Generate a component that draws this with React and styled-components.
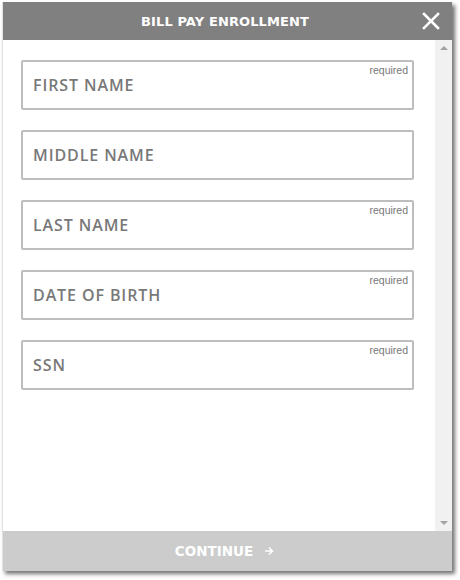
import React from "react";
import styled, { createGlobalStyle } from "styled-components";

const GlobalStyle = createGlobalStyle`
  html, body {
    margin: 0;
    padding: 0;
    background: #ffffff;
  }
  body {
    font-family: "DejaVu Sans", "Liberation Sans", sans-serif;
  }
`;

const Page = styled.div`
  padding: 2px;
  width: 460px;
  height: 580px;
  box-sizing: border-box;
`;

const Dialog = styled.div`
  width: 450px;
  height: 569px;
  display: flex;
  flex-direction: column;
  background: #fff;
  border-left: 1px solid #e2e2e2;
  box-sizing: border-box;
  box-shadow: 3px 3px 4px rgba(0, 0, 0, 0.55);
`;

const Header = styled.div`
  position: relative;
  height: 38px;
  flex: none;
  background: #808080;
  display: flex;
  align-items: center;
  justify-content: center;
  padding-right: 5px;
  color: #fff;
  font-size: 13px;
  font-weight: bold;
  letter-spacing: 0.1px;
`;

const CloseButton = styled.button`
  position: absolute;
  right: 12px;
  top: 10px;
  width: 18px;
  height: 18px;
  padding: 0;
  border: none;
  background: none;
  cursor: pointer;
  display: flex;
`;

const Body = styled.div`
  flex: 1;
  display: flex;
  min-height: 0;
`;

const Form = styled.div`
  flex: 1;
  padding: 20px 21px 0 18px;
  display: flex;
  flex-direction: column;
  gap: 20px;
`;

const Field = styled.div`
  position: relative;
  height: 50px;
  border: 2px solid #bdbdbd;
  border-radius: 2px;
  box-sizing: border-box;
  display: flex;
  align-items: center;
  padding-left: 10px;
  padding-bottom: 1px;
  color: #787878;
  font-family: "Open Sans", "DejaVu Sans", sans-serif;
  font-weight: 600;
  font-size: 16px;
  letter-spacing: 0.9px;
`;

const Required = styled.span`
  position: absolute;
  top: 2px;
  right: 4px;
  font-family: "Liberation Sans", Arial, sans-serif;
  font-weight: normal;
  font-size: 10.5px;
  color: #777;
  letter-spacing: 0;
`;

const Scrollbar = styled.div`
  width: 17px;
  flex: none;
  background: #f1f1f1;
  display: flex;
  flex-direction: column;
  justify-content: space-between;
  align-items: center;
  padding: 6px 0 6px;
`;

const Arrow = styled.span`
  width: 0;
  height: 0;
  border-left: 4px solid transparent;
  border-right: 4px solid transparent;
  ${(p) =>
    p.$down
      ? "border-top: 4px solid #a3a3a3;"
      : "border-bottom: 4px solid #a3a3a3;"}
`;

const Footer = styled.div`
  height: 40px;
  flex: none;
  background: #cccccc;
  display: flex;
  align-items: center;
  justify-content: center;
  gap: 11px;
  padding-right: 6px;
  color: #fff;
  font-size: 13.5px;
  font-weight: bold;
`;

const fields = [
  { label: "FIRST NAME", required: true },
  { label: "MIDDLE NAME", required: false },
  { label: "LAST NAME", required: true },
  { label: "DATE OF BIRTH", required: true },
  { label: "SSN", required: true },
];

export default function App() {
  return (
    <>
      <GlobalStyle />
      <Page>
        <Dialog>
          <Header>
            BILL PAY ENROLLMENT
            <CloseButton aria-label="close">
              <svg width="18" height="18" viewBox="0 0 18 18">
                <path
                  d="M2 2 L16 16 M16 2 L2 16"
                  stroke="#fff"
                  strokeWidth="2.6"
                  strokeLinecap="square"
                />
              </svg>
            </CloseButton>
          </Header>
          <Body>
            <Form>
              {fields.map((f) => (
                <Field key={f.label}>
                  {f.label}
                  {f.required && <Required>required</Required>}
                </Field>
              ))}
            </Form>
            <Scrollbar>
              <Arrow />
              <Arrow $down />
            </Scrollbar>
          </Body>
          <Footer>
            CONTINUE
            <svg width="10" height="10" viewBox="0 0 10 10">
              <path
                d="M1 5 H8.5 M5 1.5 L8.5 5 L5 8.5"
                stroke="#fff"
                strokeWidth="1.5"
                fill="none"
              />
            </svg>
          </Footer>
        </Dialog>
      </Page>
    </>
  );
}
